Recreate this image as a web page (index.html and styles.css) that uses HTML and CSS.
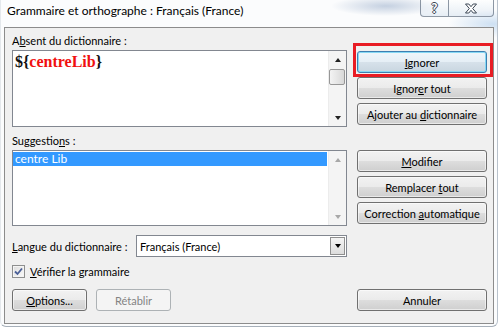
FILE: index.html
```html
<!DOCTYPE html>
<html lang="fr">
<head>
    <meta charset="UTF-8">
    <title>Grammaire et orthographe</title>
    <link rel="stylesheet" href="styles.css">
</head>
<body>
    <div class="window">
        <div class="titlebar">
            <span class="title">Grammaire et orthographe : Français (France)</span>
            <div class="caption">
                <span class="cap-btn help">?</span>
                <span class="cap-btn close">
                    <svg width="14" height="11" viewBox="0 0 14 11">
                        <path d="M1.5 1 L4.8 1 L7 3.7 L9.2 1 L12.5 1 L8.7 5.5 L12.5 10 L9.2 10 L7 7.3 L4.8 10 L1.5 10 L5.3 5.5 Z" fill="#fff" stroke="#3b4654" stroke-width="1" stroke-linejoin="round"/>
                    </svg>
                </span>
            </div>
        </div>

        <div class="client">
            <div class="field-label left">A<u>b</u>sent du dictionnaire :</div>
            <div class="editbox left">
                <div class="edit-text"><span class="tok">${</span><span class="err">centreLib</span><span class="tok">}</span></div>
                <div class="vscroll">
                    <span class="sb-btn"><span class="arrow up"></span></span>
                    <span class="thumb"></span>
                    <span class="sb-track"></span>
                    <span class="sb-btn"><span class="arrow down"></span></span>
                </div>
            </div>
            <div class="btn-group right first">
                <button class="btn default"><u>I</u>gnorer</button>
                <button class="btn">Ignor<u>e</u>r tout</button>
                <button class="btn">Ajouter au <u>d</u>ictionnaire</button>
            </div>

            <div class="field-label left">Suggestio<u>n</u>s :</div>
            <div class="listbox left">
                <ul class="items">
                    <li class="selected">centre Lib</li>
                </ul>
                <div class="vscroll disabled">
                    <span class="sb-btn"><span class="arrow up"></span></span>
                    <span class="sb-track"></span>
                    <span class="sb-btn"><span class="arrow down"></span></span>
                </div>
            </div>
            <div class="btn-group right">
                <button class="btn"><u>M</u>odifier</button>
                <button class="btn">Remplacer <u>t</u>out</button>
                <button class="btn">Correction <u>a</u>utomatique</button>
            </div>

            <div class="lang-row left">
                <span class="lang-label"><u>L</u>angue du dictionnaire :</span>
                <div class="combo">
                    <span class="combo-text">Français (France)</span>
                    <span class="combo-btn"><span class="arrow down"></span></span>
                </div>
            </div>

            <div class="check-row left">
                <span class="checkbox">
                    <svg width="9" height="9" viewBox="0 0 9 9">
                        <path d="M1 4.5 L3.5 7 L8 1.5" fill="none" stroke="#4a5f97" stroke-width="1.8"/>
                    </svg>
                </span>
                <span><u>V</u>érifier la grammaire</span>
            </div>

            <div class="bottom-left left">
                <button class="btn small"><u>O</u>ptions...</button>
                <button class="btn small" disabled>Rétablir</button>
            </div>
            <button class="btn right">Annuler</button>
        </div>

        <div class="focus-mark"></div>
    </div>
</body>
</html>
```

FILE: styles.css
```css
body {
    margin: 0;
    background: #fff;
    font-family: Lato, "Liberation Sans", sans-serif;
    font-size: 11px;
    color: #000;
}

.window {
    position: relative;
    width: 498px;
    height: 327px;
    box-sizing: border-box;
    border-right: 1px solid #b9c2cc;
    border-bottom: 1px solid #a7b0ba;
    border-left: 1px solid #e4e8ec;
    border-radius: 0 0 6px 6px;
    background:
        radial-gradient(ellipse 55px 10px at 385px 6px, rgba(130, 155, 190, 0.45), rgba(255, 255, 255, 0)),
        radial-gradient(ellipse 45px 14px at 492px 24px, rgba(175, 205, 235, 0.6), rgba(255, 255, 255, 0)),
        #fbfcfd;
}

.titlebar {
    height: 27px;
    display: flex;
    justify-content: space-between;
    align-items: flex-start;
    padding-left: 6px;
    padding-right: 3px;
}

.title {
    padding-top: 3px;
    line-height: 16px;
    font-size: 12px;
    color: #000;
}

.caption {
    display: flex;
}

.cap-btn {
    height: 17px;
    box-sizing: border-box;
    display: flex;
    align-items: center;
    justify-content: center;
    border: 1px solid rgba(70, 85, 105, 0.6);
    border-top: none;
    background: linear-gradient(rgba(255, 255, 255, 0.5), rgba(210, 222, 236, 0.5));
}

.cap-btn.help {
    width: 28px;
    border-radius: 0 0 0 4px;
    border-right: none;
    font-weight: bold;
    font-size: 13px;
    color: #fff;
    text-shadow: 1px 0 #3b4654, -1px 0 #3b4654, 0 1px #3b4654, 0 -1px #3b4654;
}

.cap-btn.close {
    width: 46px;
    border-radius: 0 0 4px 0;
}

/* rows: label, edit box, label, list, language, checkbox, buttons */
.client {
    position: relative;
    margin-left: 3px;
    width: 490px;
    height: 297px;
    box-sizing: border-box;
    border: 1px solid #8c8c8c;
    background: #f0f0f0;
    padding: 5px 6px 0 7px;
    display: grid;
    grid-template-columns: 335px 130px;
    grid-template-rows: 17px 77px 23px 76px 31px 22px 32px;
    align-content: start;
    column-gap: 10px;
}

.left { grid-column: 1; }
.right { grid-column: 2; align-self: end; }

.field-label {
    align-self: end;
    line-height: 16px;
    margin-bottom: 1px;
}

.editbox,
.listbox {
    box-sizing: border-box;
    border: 1px solid #828790;
    background: #fff;
    display: flex;
}

.edit-text {
    flex: 1;
    padding: 2px 0 0 2px;
    font-family: "Liberation Serif", serif;
    font-weight: bold;
    font-size: 16px;
    line-height: 18px;
}

.edit-text .tok {
    color: #111;
}

.edit-text .err {
    color: #f01010;
}

.vscroll {
    width: 17px;
    display: flex;
    flex-direction: column;
    background: #f4f4f4;
    border-left: 1px solid #ececec;
}

.sb-btn {
    height: 17px;
    display: flex;
    align-items: center;
    justify-content: center;
}

.sb-track {
    flex: 1;
}

.thumb {
    height: 14px;
    margin: 1px 1px 0 0;
    border: 1px solid #979797;
    border-radius: 2px;
    background: linear-gradient(to right, #f3f3f3, #e6e6e6 50%, #d8d8d8);
}

.arrow {
    width: 0;
    height: 0;
    border-left: 3.5px solid transparent;
    border-right: 3.5px solid transparent;
}

.arrow.up {
    border-bottom: 4px solid #222;
}

.arrow.down {
    border-top: 4px solid #222;
}

.vscroll.disabled .arrow.up {
    border-bottom-color: #a8a8a8;
}

.vscroll.disabled .arrow.down {
    border-top-color: #a8a8a8;
}

.items {
    flex: 1;
    list-style: none;
    margin: 0;
    padding: 1px 1px 0 0;
}

.items li {
    height: 14px;
    line-height: 14px;
    padding-left: 2px;
    font-size: 12px;
}

.items li.selected {
    background: #3399ff;
    color: #fff;
}

.btn-group {
    align-self: start;
    display: flex;
    flex-direction: column;
    gap: 4px;
}

.btn-group.first {
    padding-top: 1px;
}

.btn {
    height: 22px;
    width: 130px;
    box-sizing: border-box;
    padding: 0;
    border: 1px solid #707070;
    border-radius: 3px;
    background: linear-gradient(#f2f2f2 0%, #ebebeb 48%, #dddddd 52%, #cfcfcf 100%);
    box-shadow: inset 0 0 0 1px rgba(255, 255, 255, 0.55);
    font-family: inherit;
    font-size: 11px;
    font-weight: normal;
    color: #000;
}

.btn.default {
    border-color: #3c7fb1;
    box-shadow: inset 0 0 0 1px #86d8f4;
    background: linear-gradient(#eef6fb 0%, #e6eff6 48%, #d6e1ea 52%, #c9d6e0 100%);
}

.btn.small {
    width: 75px;
}

.btn:disabled {
    border-color: #adb2b5;
    background: #f4f4f4;
    box-shadow: none;
    color: #838383;
}

.lang-row {
    align-self: end;
    display: flex;
    align-items: center;
    justify-content: space-between;
}

.lang-label {
    white-space: nowrap;
}

.combo {
    width: 211px;
    height: 22px;
    flex-shrink: 0;
    box-sizing: border-box;
    border: 1px solid #828790;
    background: #fff;
    display: flex;
    align-items: center;
    padding: 1px;
}

.combo-text {
    flex: 1;
    padding-left: 2px;
}

.combo-btn {
    width: 15px;
    height: 18px;
    box-sizing: border-box;
    border: 1px solid #8f8f8f;
    background: linear-gradient(#f4f4f4, #dcdcdc);
    display: flex;
    align-items: center;
    justify-content: center;
}

.combo-btn .arrow.down {
    border-top-color: #000;
}

.check-row {
    align-self: end;
    height: 16px;
    display: flex;
    align-items: center;
    gap: 5px;
}

.checkbox {
    width: 13px;
    height: 13px;
    box-sizing: border-box;
    border: 1px solid #8e8f8f;
    background: linear-gradient(135deg, #dcdcdc, #fbfbfb);
    box-shadow: inset 0 0 0 1px #f4f4f4;
    display: flex;
    align-items: center;
    justify-content: center;
}

.bottom-left {
    align-self: end;
    display: flex;
    gap: 9px;
}

.focus-mark {
    position: absolute;
    left: 352px;
    top: 43px;
    width: 140px;
    height: 34px;
    box-sizing: border-box;
    border: 3px solid #e81c24;
}
```
